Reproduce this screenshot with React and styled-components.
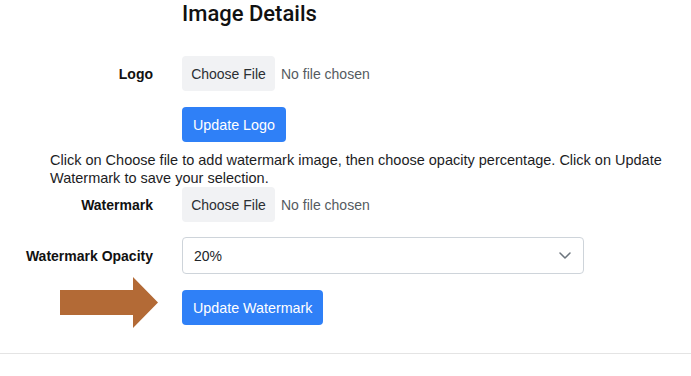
import React from "react";
import styled, { createGlobalStyle } from "styled-components";

const GlobalStyle = createGlobalStyle`
	body {
		margin: 0;
		background: #ffffff;
		font-family: "Liberation Sans", Arial, sans-serif;
		color: #212529;
	}
`;

function Arrow() {
	return (
		<svg width="98" height="51" viewBox="0 0 98 51">
			<polygon
				points="0,13 73,13 73,0 98,25.5 73,51 73,38 0,38"
				fill="#b36a36"
			/>
		</svg>
	);
}

function Chevron() {
	return (
		<svg width="12" height="7" viewBox="0 0 12 7">
			<polyline
				points="1,1 6,6 11,1"
				fill="none"
				stroke="#6c757d"
				strokeWidth="1.5"
				strokeLinecap="round"
				strokeLinejoin="round"
			/>
		</svg>
	);
}

function FileInput() {
	return (
		<FileWrap>
			<ChooseButton>Choose File</ChooseButton>
			<NoFile>No file chosen</NoFile>
		</FileWrap>
	);
}

export default function App() {
	return (
		<Page>
			<GlobalStyle />
			<Form>
				<Spacer />
				<Heading>Image Details</Heading>

				<Label top="29px">Logo</Label>
				<Field top="29px">
					<FileInput />
				</Field>

				<Spacer />
				<Field top="16px">
					<PrimaryButton>Update Logo</PrimaryButton>
				</Field>

				<Instructions>
					Click on Choose file to add watermark image, then choose opacity
					percentage. Click on Update Watermark to save your selection.
				</Instructions>

				<Label>Watermark</Label>
				<Field>
					<FileInput />
				</Field>

				<Label top="15px">Watermark Opacity</Label>
				<Field top="15px">
					<Select>
						<span>20%</span>
						<Chevron />
					</Select>
				</Field>

				<ArrowCell>
					<Arrow />
				</ArrowCell>
				<Field top="16px">
					<PrimaryButton>Update Watermark</PrimaryButton>
				</Field>
			</Form>
			<Divider />
		</Page>
	);
}

const Page = styled.div`
	width: 691px;
	min-height: 376px;
`;

const Form = styled.div`
	display: grid;
	grid-template-columns: 153px 1fr;
	column-gap: 29px;
	align-items: center;
`;

const Spacer = styled.div``;

const Heading = styled.h2`
	margin: 0;
	font-family: Roboto, "Liberation Sans", sans-serif;
	font-size: 22px;
	font-weight: 500;
	line-height: 27px;
	color: #111;
`;

const Label = styled.label`
	margin-top: ${(p) => p.top || "0"};
	text-align: right;
	font-size: 14px;
	font-weight: 700;
	color: #111;
`;

const Field = styled.div`
	margin-top: ${(p) => p.top || "0"};
	display: flex;
	align-items: center;
`;

const FileWrap = styled.div`
	display: flex;
	align-items: center;
	gap: 6px;
`;

const ChooseButton = styled.span`
	display: inline-flex;
	align-items: center;
	justify-content: center;
	width: 93px;
	height: 35px;
	border-radius: 4px;
	background: #f1f2f4;
	font-size: 14px;
	color: #2b2f33;
`;

const NoFile = styled.span`
	font-size: 14px;
	color: #555b61;
`;

const PrimaryButton = styled.button`
	height: 35px;
	padding: 0 11px;
	border: none;
	border-radius: 4px;
	background: #2f80f7;
	color: #ffffff;
	font-family: "Liberation Sans", Arial, sans-serif;
	font-size: 14.3px;
`;

const Instructions = styled.p`
	grid-column: 1 / -1;
	margin: 9px 20px 0 50px;
	font-size: 14.5px;
	line-height: 18px;
	color: #1d1d1f;
`;

const Select = styled.div`
	box-sizing: border-box;
	width: 402px;
	height: 37px;
	display: flex;
	align-items: center;
	justify-content: space-between;
	padding: 0 12px 0 11px;
	border: 1px solid #ced4da;
	border-radius: 4px;
	font-size: 14px;
	color: #212529;
`;

const ArrowCell = styled.div`
	align-self: start;
	justify-self: end;
	display: flex;
	margin: 3px -5px -3px 0;
`;

const Divider = styled.hr`
	margin: 28px 0 0;
	border: none;
	border-top: 1px solid #e4e4e4;
`;
